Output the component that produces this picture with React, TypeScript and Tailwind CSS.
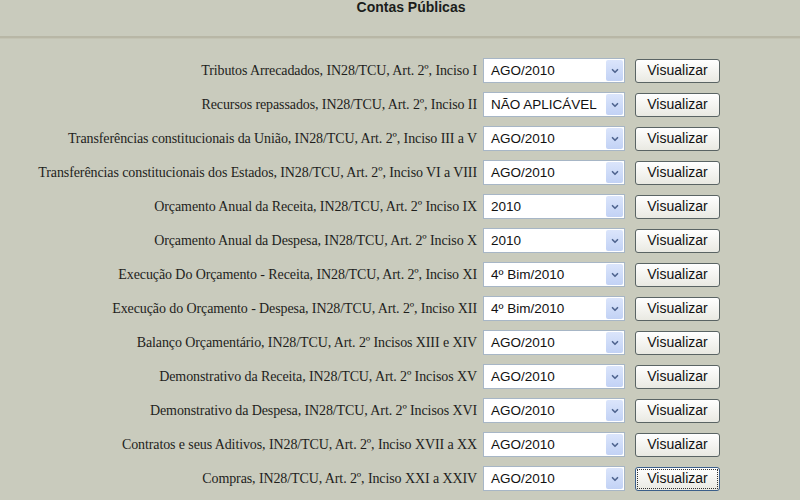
import { ChevronDown } from 'lucide-react';

interface Row {
  label: string;
  value: string;
}

const rows: Row[] = [
  { label: 'Tributos Arrecadados, IN28/TCU, Art. 2º, Inciso I', value: 'AGO/2010' },
  { label: 'Recursos repassados, IN28/TCU, Art. 2º, Inciso II', value: 'NÃO APLICÁVEL' },
  { label: 'Transferências constitucionais da União, IN28/TCU, Art. 2º, Inciso III a V', value: 'AGO/2010' },
  { label: 'Transferências constitucionais dos Estados, IN28/TCU, Art. 2º, Inciso VI a VIII', value: 'AGO/2010' },
  { label: 'Orçamento Anual da Receita, IN28/TCU, Art. 2º Inciso IX', value: '2010' },
  { label: 'Orçamento Anual da Despesa, IN28/TCU, Art. 2º Inciso X', value: '2010' },
  { label: 'Execução Do Orçamento - Receita, IN28/TCU, Art. 2º, Inciso XI', value: '4º Bim/2010' },
  { label: 'Execução do Orçamento - Despesa, IN28/TCU, Art. 2º, Inciso XII', value: '4º Bim/2010' },
  { label: 'Balanço Orçamentário, IN28/TCU, Art. 2º Incisos XIII e XIV', value: 'AGO/2010' },
  { label: 'Demonstrativo da Receita, IN28/TCU, Art. 2º Incisos XV', value: 'AGO/2010' },
  { label: 'Demonstrativo da Despesa, IN28/TCU, Art. 2º Incisos XVI', value: 'AGO/2010' },
  { label: 'Contratos e seus Aditivos, IN28/TCU, Art. 2º, Inciso XVII a XX', value: 'AGO/2010' },
  { label: 'Compras, IN28/TCU, Art. 2º, Inciso XXI a XXIV', value: 'AGO/2010' },
];

function FakeSelect({ value }: { value: string }) {
  return (
    <div className="flex h-[25px] w-[142px] items-stretch border border-[#a7b6c6] bg-white p-px">
      <div className="flex-1 truncate pl-[6px] text-[13.5px] leading-[21px] text-[#111] font-['Liberation_Sans',Arial,sans-serif]">
        {value}
      </div>
      <div className="flex w-[17px] items-center justify-center rounded-[2px] bg-gradient-to-b from-[#dbe5fb] to-[#c2d2f5]">
        <ChevronDown className="h-[10px] w-[10px] text-[#506590]" strokeWidth={4} />
      </div>
    </div>
  );
}

function VisualizarButton({ focused }: { focused?: boolean }) {
  return (
    <button
      className={
        'flex h-[24px] w-[85px] items-center justify-center rounded-[3px] border bg-gradient-to-b from-[#ffffff] to-[#e9e9e2] p-[2px] text-[14px] text-[#111] font-[\'Liberation_Sans\',Arial,sans-serif] ' +
        (focused ? 'border-[#3b5f8a]' : 'border-[#5a6464]')
      }
    >
      <span
        className={
          'flex h-full w-full items-center justify-center ' +
          (focused ? 'outline outline-1 outline-dotted outline-[#333]' : '')
        }
      >
        Visualizar
      </span>
    </button>
  );
}

export default function App() {
  return (
    <div className="h-[500px] w-[800px] overflow-hidden bg-[#c9cbbd]">
      <div className="h-[36px] pl-[22px] text-center text-[14px] font-bold leading-[14px] text-[#1b1d1b] font-['Liberation_Sans',Arial,sans-serif]">
        Contas Públicas
      </div>
      <div className="h-[3px] border-t-2 border-[#b8b7a6] bg-[#c3c3b3]" />
      <div className="flex flex-col gap-[9px] pt-[19px]">
        {rows.map((row, i) => (
          <div key={i} className="flex h-[25px] items-center">
            <div className="w-[478px] pr-[1px] text-right text-[14px] tracking-[-0.1px] text-[#1e1e1c] font-['Liberation_Serif','Times_New_Roman',serif]">
              {row.label}
            </div>
            <div className="ml-[5px]">
              <FakeSelect value={row.value} />
            </div>
            <div className="ml-[10px]">
              <VisualizarButton focused={i === rows.length - 1} />
            </div>
          </div>
        ))}
      </div>
    </div>
  );
}
